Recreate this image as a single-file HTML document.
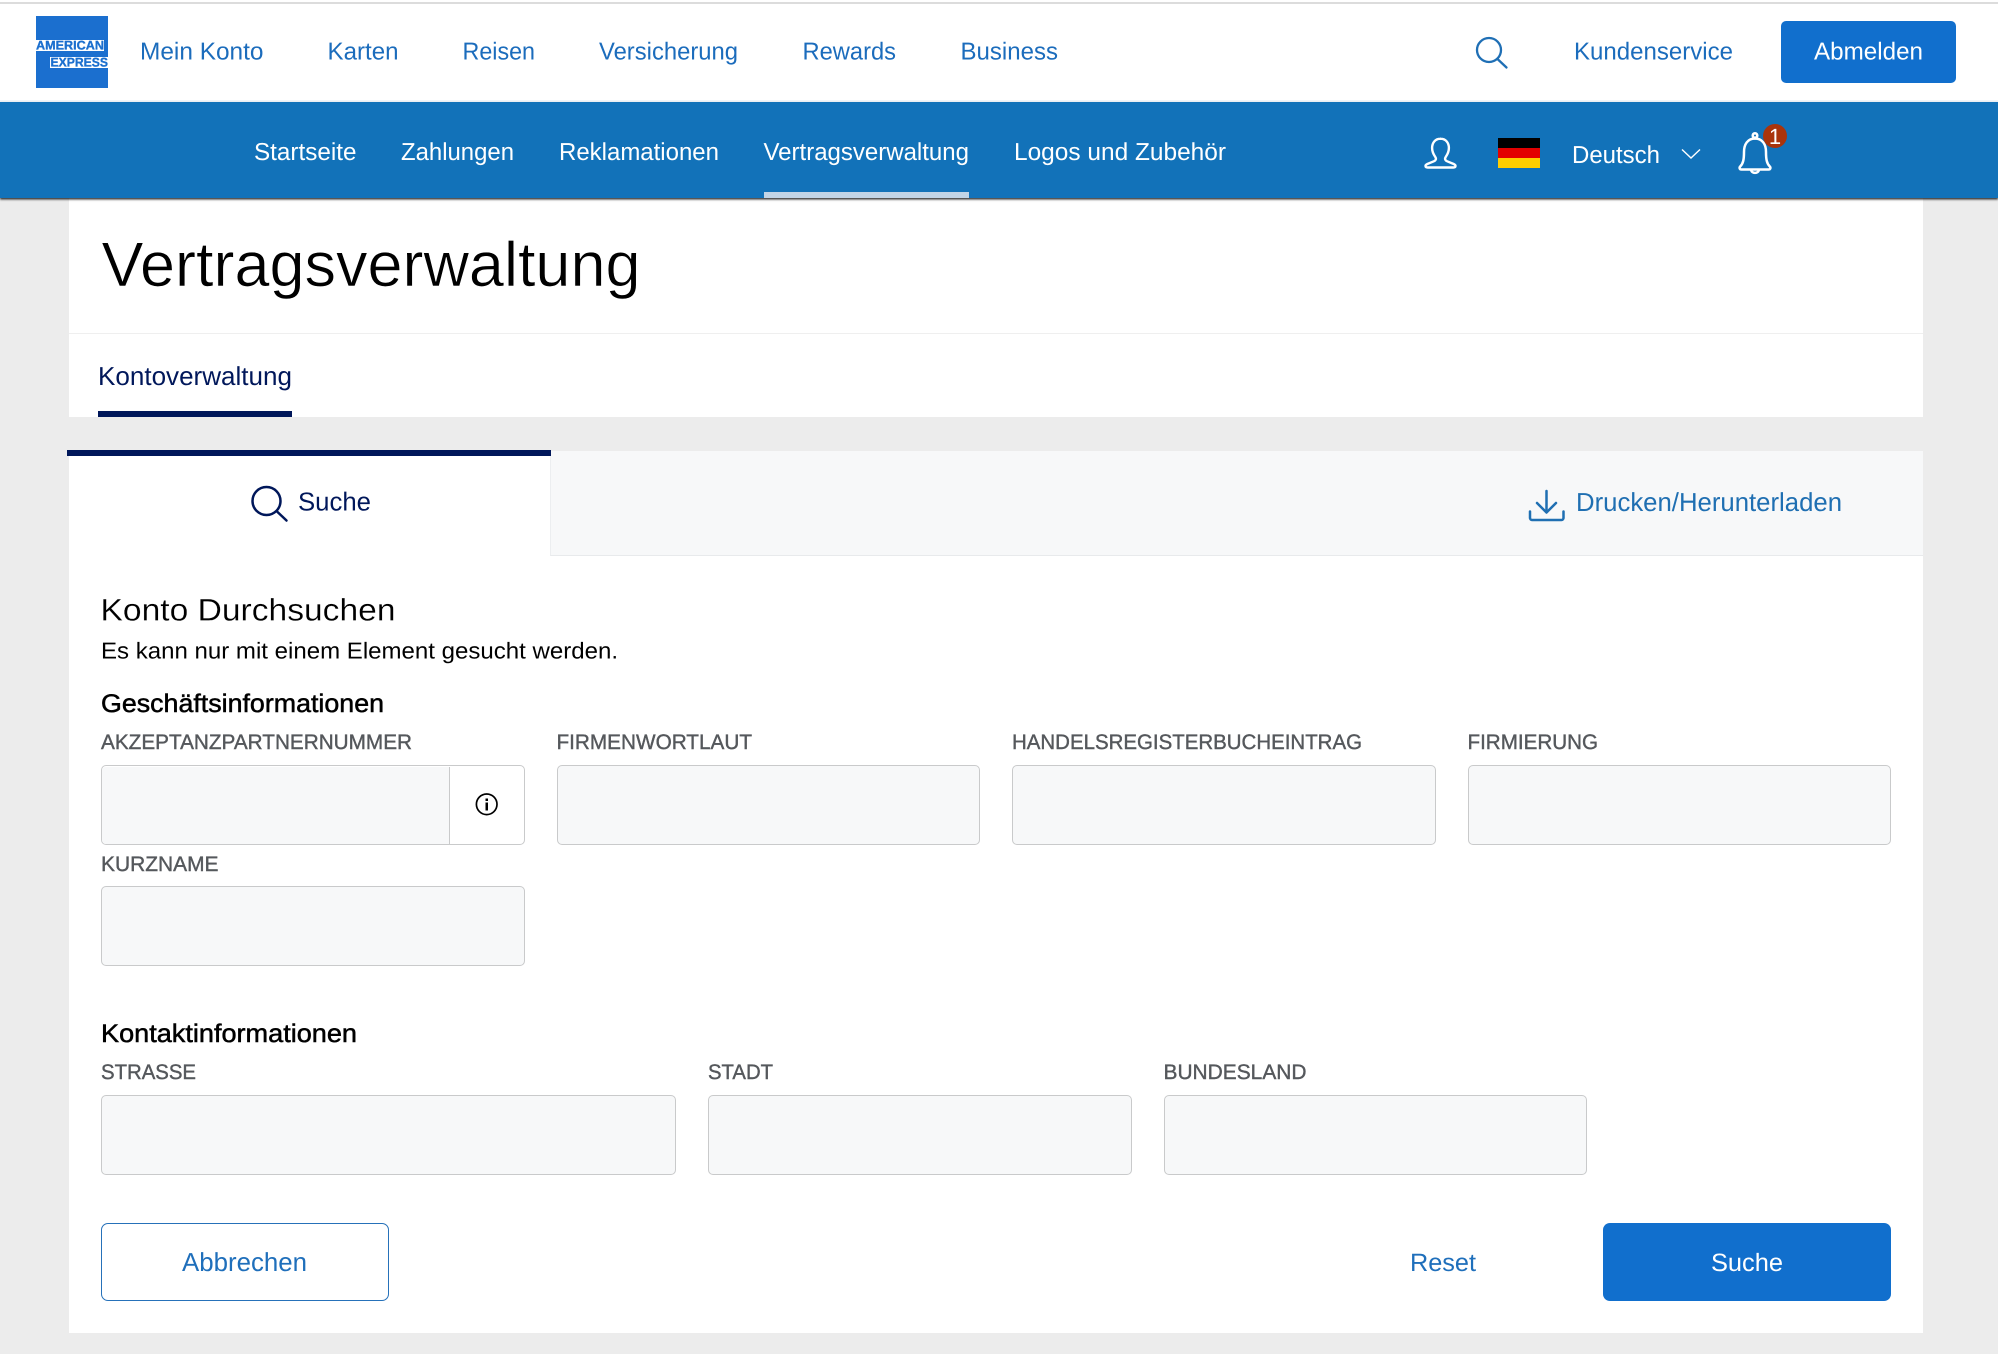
<!DOCTYPE html>
<html lang="de">
<head>
<meta charset="utf-8">
<title>Vertragsverwaltung</title>
<style>
html,body{margin:0;padding:0;width:1998px;height:1354px;overflow:hidden;background:#ececec;font-family:"Liberation Sans",Arial,sans-serif}
.b{position:absolute;box-sizing:border-box}
.in{background:#f7f8f9;border:1.5px solid #c9cacb;border-radius:5px;height:80px}
svg{position:absolute;left:0;top:0}
text{font-family:"Liberation Sans",Arial,sans-serif;text-rendering:geometricPrecision}
.nav{font-size:24.5px;fill:#1b6cbc}
.sub{font-size:24.5px;fill:#fff}
.lab{font-size:21px;fill:#55585c;stroke:#55585c;stroke-width:.4px}
.h{font-size:25.5px;fill:#000;stroke:#000;stroke-width:.5px}
</style>
</head>
<body>
<div class="b" style="left:0;top:0;width:1998px;height:100px;background:#fff"></div>
<div class="b" style="left:0;top:2px;width:1998px;height:2px;background:#dcdcdc"></div>
<div class="b" style="left:0;top:100px;width:1998px;height:2px;background:#f0f4f8"></div>
<div class="b" style="left:69px;top:198px;width:1854px;height:219px;background:#fff"></div>
<div class="b" style="left:69px;top:333px;width:1854px;height:1px;background:#efefef"></div>
<div class="b" style="left:0;top:102px;width:1998px;height:96px;background:#1272b9;box-shadow:0 1.5px 2px rgba(0,0,0,.8)"></div>
<div class="b" style="left:764px;top:192px;width:205px;height:6px;background:#c2d5e7"></div>
<div class="b" style="left:1781px;top:21px;width:175px;height:62px;background:#116fcd;border-radius:5px"></div>
<div class="b" style="left:36px;top:16px;width:72px;height:72px;background:#1b6fcf"></div>
<div class="b" style="left:36px;top:39.500px;width:68px;height:11px;background:#fff"></div>
<div class="b" style="left:50px;top:56.500px;width:58px;height:11px;background:#fff"></div>
<div class="b" style="left:98px;top:411px;width:194px;height:6px;background:#00175a"></div>
<div class="b" style="left:69px;top:451px;width:1854px;height:882px;background:#fff"></div>
<div class="b" style="left:549.500px;top:451px;width:1373.500px;height:105px;background:#f7f8f9;border-left:1px solid #eceef0;border-bottom:1px solid #e8eaec"></div>
<div class="b" style="left:67px;top:450px;width:484px;height:6px;background:#00175a"></div>
<div class="b in" style="left:101px;top:765px;width:424px;background:#fff"></div>
<div class="b" style="left:102px;top:766.5px;width:348px;height:77px;background:#f7f8f9;border-right:1.5px solid #c9cacb;border-radius:4px 0 0 4px"></div>
<div class="b in" style="left:557px;top:765px;width:423px"></div>
<div class="b in" style="left:1012px;top:765px;width:424px"></div>
<div class="b in" style="left:1468px;top:765px;width:423px"></div>
<div class="b in" style="left:101px;top:886px;width:424px"></div>
<div class="b in" style="left:101px;top:1095px;width:575px"></div>
<div class="b in" style="left:708px;top:1095px;width:424px"></div>
<div class="b in" style="left:1163.500px;top:1095px;width:423.500px"></div>
<div class="b" style="left:101px;top:1223px;width:288px;height:78px;background:#fff;border:1.5px solid #2671b9;border-radius:7px"></div>
<div class="b" style="left:1603px;top:1223px;width:288px;height:78px;background:#116fcd;border-radius:7px"></div>

<svg width="1998" height="1354" viewBox="0 0 1998 1354" xmlns="http://www.w3.org/2000/svg">
<text x="36" y="49.300" font-size="12.500" font-weight="700" fill="#1b6fcf" stroke="#1b6fcf" stroke-width=".35" textLength="68" lengthAdjust="spacingAndGlyphs">AMERICAN</text>
<text x="50.500" y="66.300" font-size="12.500" font-weight="700" fill="#1b6fcf" stroke="#1b6fcf" stroke-width=".35" textLength="57.500" lengthAdjust="spacingAndGlyphs">EXPRESS</text>

<text class="nav" x="140" y="59.500" textLength="123.500" lengthAdjust="spacingAndGlyphs">Mein Konto</text>
<text class="nav" x="327.500" y="59.500" textLength="71" lengthAdjust="spacingAndGlyphs">Karten</text>
<text class="nav" x="462.500" y="59.500" textLength="72.500" lengthAdjust="spacingAndGlyphs">Reisen</text>
<text class="nav" x="599" y="59.500" textLength="139" lengthAdjust="spacingAndGlyphs">Versicherung</text>
<text class="nav" x="802.500" y="59.500" textLength="93.500" lengthAdjust="spacingAndGlyphs">Rewards</text>
<text class="nav" x="960.500" y="59.500" textLength="97.500" lengthAdjust="spacingAndGlyphs">Business</text>
<text class="nav" x="1574" y="59.500" textLength="159" lengthAdjust="spacingAndGlyphs">Kundenservice</text>
<text x="1814" y="59.500" font-size="24.500" fill="#fff" textLength="109" lengthAdjust="spacingAndGlyphs">Abmelden</text>
<g fill="none" stroke="#1f6fb5" stroke-width="2.300" stroke-linecap="round">
<circle cx="1489" cy="50" r="12"/>
<path d="M1498 59.500L1506.500 67.500"/>
</g>

<text class="sub" x="254" y="160" textLength="102.500" lengthAdjust="spacingAndGlyphs">Startseite</text>
<text class="sub" x="401" y="160" textLength="113" lengthAdjust="spacingAndGlyphs">Zahlungen</text>
<text class="sub" x="559" y="160" textLength="160" lengthAdjust="spacingAndGlyphs">Reklamationen</text>
<text class="sub" x="763.500" y="160" textLength="205.500" lengthAdjust="spacingAndGlyphs">Vertragsverwaltung</text>
<text class="sub" x="1014" y="160" textLength="212" lengthAdjust="spacingAndGlyphs">Logos und Zubehör</text>
<text class="sub" x="1572" y="163" textLength="88" lengthAdjust="spacingAndGlyphs">Deutsch</text>

<path d="M1440.500 138.700c-5.200 0-8.400 4-8.400 9.300 0 3.800 1.700 6.800 3.200 9 1.300 2 .5 3.400-1.500 4.300l-6.500 2.700c-2.700 1.200-2.200 3.500.4 3.500h25.600c2.600 0 3.100-2.300.4-3.500l-6.500-2.700c-2-.9-2.800-2.300-1.500-4.300 1.500-2.200 3.200-5.200 3.200-9 0-5.300-3.200-9.300-8.400-9.300z" fill="none" stroke="#fff" stroke-width="2.400" stroke-linejoin="round"/>
<rect x="1498" y="138" width="42" height="10" fill="#000"/>
<rect x="1498" y="148" width="42" height="10" fill="#e30000"/>
<rect x="1498" y="158" width="42" height="10" fill="#ffce00"/>
<path d="M1682 149.500L1691 158L1700 149.500" fill="none" stroke="#fff" stroke-width="1.400"/>
<g fill="none" stroke="#fff" stroke-width="2.500" stroke-linejoin="round">
<circle cx="1755" cy="135.500" r="2.300"/>
<path d="M1755 138.500c-7.500 0-11 6-11 13.500 0 7.500-.8 11.500-3.800 14.500-1.200 1.300-.5 3 1.200 3h27.200c1.700 0 2.400-1.700 1.200-3-3-3-3.800-7-3.800-14.500 0-7.500-3.500-13.500-11-13.500z"/>
<path d="M1751 170a4.200 4.200 0 0 0 8 0"/>
</g>
<circle cx="1775" cy="136" r="12" fill="#a9340c"/>
<text x="1775" y="144" font-size="22" fill="#fff" text-anchor="middle">1</text>

<text x="101.500" y="286" font-size="63" fill="#000" stroke="#fff" stroke-width=".6" textLength="539" lengthAdjust="spacingAndGlyphs">Vertragsverwaltung</text>
<text x="98" y="385" font-size="26" fill="#00175a" textLength="194" lengthAdjust="spacingAndGlyphs">Kontoverwaltung</text>

<g fill="none" stroke="#00175a" stroke-width="2.500" stroke-linecap="round">
<circle cx="266.500" cy="501" r="14"/>
<path d="M277 511.500L286.500 520.500"/>
</g>
<text x="298" y="510.500" font-size="26" fill="#00175a" textLength="73" lengthAdjust="spacingAndGlyphs">Suche</text>
<g fill="none" stroke="#1f6fb2" stroke-width="2.500" stroke-linecap="round" stroke-linejoin="round">
<path d="M1546.500 491V511"/>
<path d="M1537 503L1546.500 512.500L1556 503"/>
<path d="M1530 511.500V518a2 2 0 0 0 2 2H1561.500a2 2 0 0 0 2-2V511.500"/>
</g>
<text x="1576" y="511" font-size="26" fill="#1f6fb2" textLength="266" lengthAdjust="spacingAndGlyphs">Drucken/Herunterladen</text>

<text x="100.500" y="620.500" font-size="31" fill="#000" stroke="#fff" stroke-width=".2" textLength="295" lengthAdjust="spacingAndGlyphs">Konto Durchsuchen</text>
<text x="101" y="658.500" font-size="23" fill="#000" textLength="517" lengthAdjust="spacingAndGlyphs">Es kann nur mit einem Element gesucht werden.</text>

<text class="h" x="101" y="712" textLength="283" lengthAdjust="spacingAndGlyphs">Geschäftsinformationen</text>
<text class="lab" x="101" y="749" textLength="311" lengthAdjust="spacingAndGlyphs">AKZEPTANZPARTNERNUMMER</text>
<text class="lab" x="556.500" y="749" textLength="195.500" lengthAdjust="spacingAndGlyphs">FIRMENWORTLAUT</text>
<text class="lab" x="1012" y="749" textLength="350" lengthAdjust="spacingAndGlyphs">HANDELSREGISTERBUCHEINTRAG</text>
<text class="lab" x="1467.500" y="749" textLength="130.500" lengthAdjust="spacingAndGlyphs">FIRMIERUNG</text>
<text class="lab" x="101" y="871" textLength="117.500" lengthAdjust="spacingAndGlyphs">KURZNAME</text>

<circle cx="486.700" cy="804.300" r="10.300" fill="none" stroke="#000" stroke-width="1.700"/>
<rect x="485.500" y="798.500" width="2.500" height="2.500" fill="#000"/>
<rect x="485.500" y="802.500" width="2.500" height="8" fill="#000"/>

<text class="h" x="101" y="1042" textLength="256" lengthAdjust="spacingAndGlyphs">Kontaktinformationen</text>
<text class="lab" x="101" y="1079" textLength="95" lengthAdjust="spacingAndGlyphs">STRASSE</text>
<text class="lab" x="708" y="1079" textLength="65" lengthAdjust="spacingAndGlyphs">STADT</text>
<text class="lab" x="1163.500" y="1079" textLength="143" lengthAdjust="spacingAndGlyphs">BUNDESLAND</text>

<text x="182" y="1271" font-size="26" fill="#1f6fbb" textLength="125" lengthAdjust="spacingAndGlyphs">Abbrechen</text>
<text x="1410" y="1271" font-size="25" fill="#1f6fbb" textLength="66" lengthAdjust="spacingAndGlyphs">Reset</text>
<text x="1711" y="1271" font-size="25" fill="#fff" textLength="72" lengthAdjust="spacingAndGlyphs">Suche</text>
</svg>
</body>
</html>
